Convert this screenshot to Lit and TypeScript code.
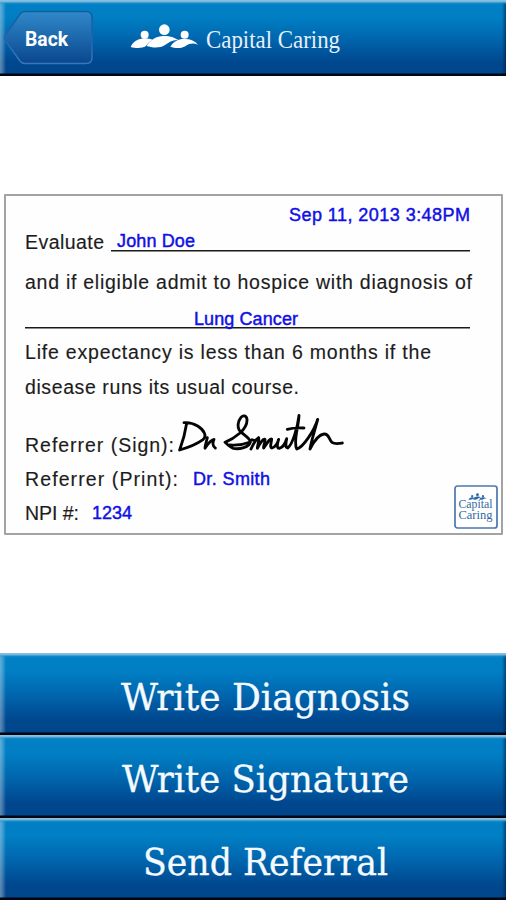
import { LitElement, html, css, svg } from "lit";
import { customElement } from "lit/decorators.js";

interface FitOptions {
  size: number;
  base: number;
  height: number;
  stretch?: boolean;
}

/** A line of text set to an exact measure. */
const fit = (text: string, width: number, cls: string, o: FitOptions) => html`
  <svg class="fit ${cls}" width=${width} height=${o.height}>
    <text x="0" y=${o.base} font-size=${o.size} textLength=${width}
      lengthAdjust=${o.stretch ? "spacingAndGlyphs" : "spacing"}>${text}</text>
  </svg>`;

const label = (text: string, width: number) =>
  fit(text, width, "label", { size: 19.5, base: 16, height: 24 });
const value = (text: string, width: number, base = 16) =>
  fit(text, width, "value", { size: 18, base, height: 24 });

const people = svg`
  <circle cx="74" cy="74" r="12"/><circle cx="133" cy="59" r="16"/><circle cx="194" cy="74" r="12"/>
  <path d="M32 111 C38 96 56 84 76 85 C85 85 92 88 98 89 C88 94 82 102 77 109 C66 116 46 115 32 111Z"/>
  <path d="M80 108 C90 89 112 77 133 78 C152 78 163 83 175 90 C160 88 147 96 135 105 C118 116 96 113 80 108Z"/>
  <path d="M151 110 C161 94 176 86 195 87 C212 87 225 93 234 104 C220 98 209 100 198 107 C186 116 165 115 151 110Z"/>`;

@customElement("app-root")
export class AppRoot extends LitElement {
  static styles = css`
    :host {
      display: flex;
      flex-direction: column;
      height: 900px;
      width: 506px;
      overflow: hidden;
      background: #fff;
      font-family: "Liberation Sans", Arial, sans-serif;
    }
    .fit { display: block; flex: none; overflow: visible; }
    .bar {
      box-sizing: border-box;
      border: 0;
      padding: 0;
      margin: 0;
      width: 100%;
      background:
        linear-gradient(to top, #000510 0 1.5px, #00000000 3.5px),
        linear-gradient(to bottom, #8fc4e2 0, #6db3dc 2px, #2a90cc88 3px, #0080c500 5px),
        linear-gradient(to right, #ffffff60 0, #ffffff38 3px, #ffffff00 6px),
        linear-gradient(to left, #00183a90 0, #00183a00 4px),
        linear-gradient(#0080c5 0%, #007fc4 22%, #0065ad 52%, #00478e 82%, #00468c 100%);
    }
    header { display: flex; height: 76px; flex: none; padding: 0; }
    .back {
      display: block;
      border: 0;
      padding: 0;
      margin: 9px 0 0 3px;
      width: 92px;
      height: 58px;
      background: none;
    }
    .backText { font: bold 20px Roboto, "Liberation Sans", sans-serif; fill: #fff; }
    .brand { display: flex; margin-left: 25px; }
    .brandText { fill: #e6f0fb; font-family: "Liberation Serif", serif; }
    .people { fill: #fff; }
    .title { margin-left: 9px; }
    main { box-sizing: border-box; height: 577px; padding: 118px 4px 0; flex: none; }
    .card {
      box-sizing: border-box;
      width: 499px;
      height: 340.5px;
      border: 2px solid #a3a3a3;
      border-radius: 1px;
      background: #fefefe;
      padding: 0 0 0 19px;
      display: grid;
      grid-template-columns: 100%;
      grid-template-rows: 32.5px 28.5px 40px 35.5px 34.5px 35px 58px 34px 34px;
      align-items: end;
    }
    .row { display: flex; align-items: flex-end; height: 24px; }
    .label { fill: #1c1c1c; stroke: #1c1c1c; stroke-width: 0.15px; }
    .value { fill: #1010e6; stroke: #1010e6; stroke-width: 0.45px; }
    .date { padding-left: 264px; }
    .line {
      display: flex;
      height: 24px;
      background: linear-gradient(#1a1a1a, #1a1a1a) 0 17px / 100% 1.5px no-repeat;
    }
    .name { width: 353px; margin-left: 7px; padding-left: 6px; }
    .diagnosis {
      width: 276px;
      padding-left: 169px;
      background-position: 0 18px;
    }
    .sign { margin: 0 0 -5px -4px; flex: none; }
    .ink { fill: none; stroke: #050505; stroke-width: 8.5px; stroke-linecap: round; stroke-linejoin: round; }
    .print { margin-left: 15px; }
    .npi { margin-left: 13px; }
    .seal { margin: 0 0 -1px 322px; flex: none; }
    .sealText { font: 12px "Liberation Serif", serif; fill: #35689f; }
    .sealPeople { fill: #2a6ba8; }
    nav { display: grid; grid-template-rows: 82px 82.5px 82.5px; height: 247px; }
    .action { display: flex; justify-content: center; padding-left: 24px; }
    .actionText {
      fill: #f4faff;
      stroke: #f4faff;
      stroke-width: 0.3px;
      font-family: "DejaVu Serif Condensed", "DejaVu Serif", serif;
      font-stretch: condensed;
    }
  `;

  private actions: [string, number][] = [
    ["Write Diagnosis", 289],
    ["Write Signature", 287],
    ["Send Referral", 245],
  ];

  render() {
    return html`
      <header class="bar">
        <button class="back" aria-label="Back">
          <svg width="92" height="58" viewBox="3 9 92 58">
            <defs>
              <linearGradient id="fill" x1="0" y1="0" x2="0" y2="1">
                <stop offset="0" stop-color="#3089c8" /><stop offset="0.5" stop-color="#1c68ad" /><stop offset="1" stop-color="#0b468c" />
              </linearGradient>
              <linearGradient id="edge" x1="0" y1="0" x2="0" y2="1">
                <stop offset="0" stop-color="#145c9e" /><stop offset="0.5" stop-color="#1f65ab" /><stop offset="1" stop-color="#3577bd" />
              </linearGradient>
            </defs>
            <path d="M25 11.500H86Q92 11.500 92 17.500V57.500Q92 63.500 86 63.500H25Q22 63.500 20 61L5.500 41Q3.500 38 5.500 35L20 14Q22 11.500 25 11.500Z"
              fill="url(#fill)" stroke="url(#edge)" stroke-width="1.5" />
            <text class="backText" x="25" y="45.500" textLength="43" lengthAdjust="spacingAndGlyphs">Back</text>
          </svg>
        </button>
        <div class="brand">
          <svg class="people" width="77" height="60" viewBox="0 -30 231 180" overflow="visible">${people}</svg>
          ${fit("Capital Caring", 134, "brandText title", { size: 26, base: 47.5, height: 60, stretch: true })}
        </div>
      </header>
      <main>
        <section class="card">
          <div class="row date">${value("Sep 11, 2013 3:48PM", 181)}</div>
          <div class="row">${label("Evaluate", 79)}<div class="line name">${value("John Doe", 78, 13.5)}</div></div>
          <div class="row">${label("and if eligible admit to hospice with diagnosis of", 447)}</div>
          <div class="row"><div class="line diagnosis">${value("Lung Cancer", 104)}</div></div>
          <div class="row">${label("Life expectancy is less than 6 months if the", 406)}</div>
          <div class="row">${label("disease runs its usual course.", 274)}</div>
          <div class="row">
            ${label("Referrer (Sign):", 149)}
            <svg class="sign" width="180" height="60" viewBox="0 0 540 180">
              <path class="ink" d="M50 55 C47 75 40 105 29 135 C54 128 78 119 99 104 C112 93 102 75 83 63 C68 54 53 52 42 53
                M112 98 C109 111 105 122 105 130 C112 119 122 105 132 103 C127 113 128 125 136 129
                M165 112 C178 107 196 96 210 84 C224 71 232 56 231 43 C229 31 219 30 213 37 C204 48 202 64 207 74 C214 86 238 96 241 110 C240 127 206 134 190 130 C182 127 174 120 167 113 M180 120 C201 122 223 118 241 111
                M243 132 C249 118 257 105 266 98 C268 109 262 123 262 130 C270 114 280 101 285 103 C286 114 279 123 281 129 C290 118 300 98 305 102 C304 116 298 128 306 129 C318 125 324 110 326 103 C322 115 319 130 328 130 C342 126 346 114 350 101 C347 116 345 127 353 129 C368 119 383 65 387 31 C386 64 369 109 380 132 C400 128 433 75 443 43 C436 71 424 107 420 132 C431 110 447 89 462 87 C478 86 477 105 486 112 C494 118 505 116 517 114
                M246 104 C252 109 261 105 266 98
                M352 73 C369 68 387 68 402 69" />
            </svg>
          </div>
          <div class="row">${label("Referrer (Print):", 153)}<div class="print">${value("Dr. Smith", 77, 15)}</div></div>
          <div class="row">
            ${label("NPI #:", 54)}<div class="npi">${value("1234", 40, 15)}</div>
            <svg class="seal" width="44" height="44" viewBox="0 0 44 44">
              <rect x="1" y="1" width="42" height="42" rx="2.500" fill="#fff" stroke="#4a77ad" stroke-width="1.700" />
              <g class="sealPeople" transform="translate(11.500 4.500) scale(0.09)">${people}</g>
              <text class="sealText" x="4.500" y="22.500" textLength="34" lengthAdjust="spacingAndGlyphs">Capital</text>
              <text class="sealText" x="4.500" y="33.500" textLength="34" lengthAdjust="spacingAndGlyphs">Caring</text>
            </svg>
          </div>
        </section>
      </main>
      <nav>
        ${this.actions.map(
          ([text, width]) => html`<button class="bar action">
            ${fit(text, width, "actionText", { size: 37.5, base: 57, height: 80, stretch: true })}
          </button>`
        )}
      </nav>
    `;
  }
}
